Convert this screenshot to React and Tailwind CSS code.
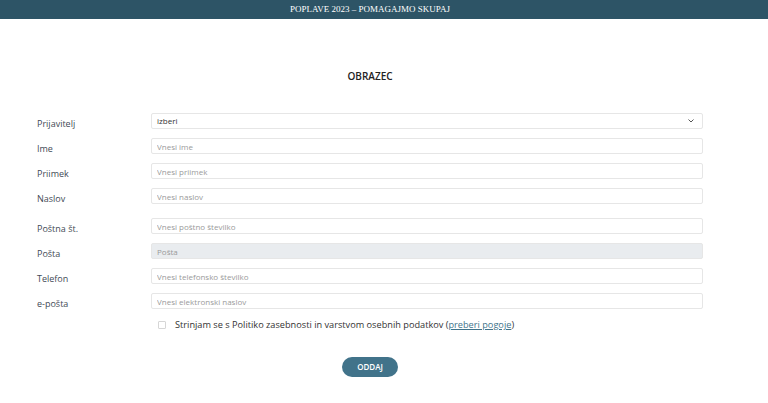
import { useState } from "react";

const font = { fontFamily: "'Open Sans', 'Liberation Sans', sans-serif" };

const fields = [
  { label: "Ime", placeholder: "Vnesi ime" },
  { label: "Priimek", placeholder: "Vnesi priimek" },
  { label: "Naslov", placeholder: "Vnesi naslov" },
  { label: "Poštna št.", placeholder: "Vnesi poštno številko", gap: true },
  { label: "Pošta", placeholder: "Pošta", disabled: true },
  { label: "Telefon", placeholder: "Vnesi telefonsko številko" },
  { label: "e-pošta", placeholder: "Vnesi elektronski naslov" },
];

function Row({ label, children, gap }) {
  return (
    <div className={`flex items-center h-4 ${gap ? "mt-[5px]" : ""}`}>
      <label className="w-[114px] shrink-0 pt-[4px] leading-none text-[9px] text-[#3f4a55]">{label}</label>
      <div className="flex-1 h-4">{children}</div>
    </div>
  );
}

export default function App() {
  const [agree, setAgree] = useState(false);

  return (
    <div className="min-h-screen bg-white" style={font}>
      <div className="h-[19px] bg-[#2d5466] flex items-center justify-center pl-[37px] pr-[65px]">
        <span className="text-[9px] text-white uppercase" style={{ fontFamily: "'Liberation Serif', serif" }}>
          Poplave 2023 – Pomagajmo skupaj
        </span>
      </div>

      <div className="pl-[37px] pr-[65px]">
        <h1 className="text-center text-[10px] leading-none font-semibold text-[#222] mt-[52px] mb-[32px]">OBRAZEC</h1>

        <form className="flex flex-col gap-[9px]">
          <Row label="Prijavitelj">
            <div className="relative h-4">
              <select className="appearance-none block w-full h-4 border border-[#e6e6e6] rounded-[2px] px-[5px] text-[8px] text-[#333] bg-white outline-none">
                <option>izberi</option>
              </select>
              <svg className="absolute right-[9px] top-[6px] w-[6px] h-[4px] pointer-events-none" viewBox="0 0 6 4" fill="none" stroke="#555" strokeWidth="1">
                <path d="M0.5 0.5 L3 3 L5.5 0.5" />
              </svg>
            </div>
          </Row>
          {fields.map((f) => (
            <Row key={f.label} label={f.label} gap={f.gap}>
              <input
                type="text"
                placeholder={f.placeholder}
                disabled={f.disabled}
                className={`block w-full h-4 border border-[#e6e6e6] rounded-[2px] px-[5px] text-[8px] outline-none placeholder:text-[#9a9a9a] ${f.disabled ? "bg-[#e9ecef]" : "bg-white"}`}
              />
            </Row>
          ))}

          <div className="flex items-center pl-[121px]">
            <button
              type="button"
              onClick={() => setAgree(!agree)}
              className={`w-[8px] h-[8px] border border-[#d6d6d6] rounded-[1px] ${agree ? "bg-[#41738a]" : "bg-white"}`}
            />
            <span className="ml-[9px] text-[9.2px] text-[#333]">
              Strinjam se s Politiko zasebnosti in varstvom osebnih podatkov (
              <a href="#" className="underline text-[#41738a]">preberi pogoje</a>)
            </span>
          </div>

          <div className="flex justify-center mt-[16px]">
            <button type="button" className="w-[56px] h-[20px] rounded-full bg-[#41738a] text-white text-[8px] font-semibold">
              ODDAJ
            </button>
          </div>
        </form>
      </div>
    </div>
  );
}
